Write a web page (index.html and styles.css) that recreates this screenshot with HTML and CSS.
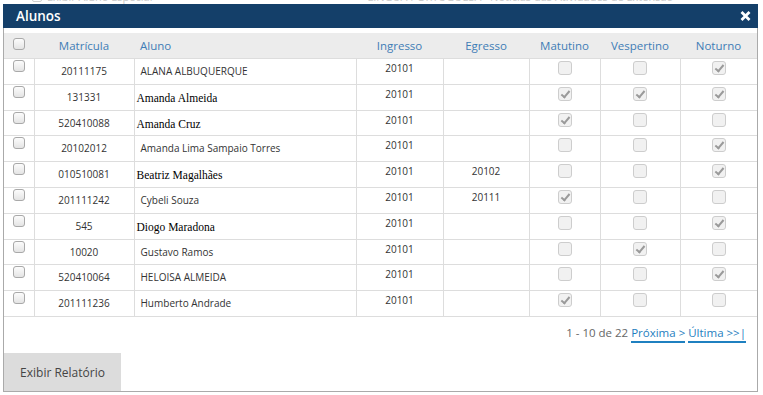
FILE: index.html
```html
<!DOCTYPE html>
<html lang="pt-BR">
<head>
    <meta charset="UTF-8">
    <meta name="viewport" content="width=device-width, initial-scale=1.0">
    <title>Alunos</title>
    <link rel="stylesheet" href="styles.css">
</head>
<body>
    <div class="backdrop">
        <div class="backdrop-left"><span class="backdrop-box"></span>Exibir Aluno Especial</div>
        <div class="backdrop-right">LÍNGUA PORTUGUESA · Notícias das Atividades de Extensão</div>
    </div>

    <div class="modal">
        <div class="modal-header">
            <span class="modal-title">Alunos</span>
            <svg class="modal-close" width="11" height="10" viewBox="0 0 11 10">
                <path d="M1.5 1 L9.5 9 M9.5 1 L1.5 9" stroke="#fff" stroke-width="2.8" fill="none"/>
            </svg>
        </div>

        <div class="modal-body">
            <table class="grid">
                <colgroup>
                    <col style="width:30px">
                    <col style="width:100px">
                    <col style="width:222px">
                    <col style="width:87px">
                    <col style="width:86px">
                    <col style="width:71px">
                    <col style="width:80px">
                    <col style="width:77px">
                </colgroup>
                <thead>
                    <tr>
                        <th><span class="sel"></span></th>
                        <th>Matrícula</th>
                        <th class="left">Aluno</th>
                        <th>Ingresso</th>
                        <th>Egresso</th>
                        <th>Matutino</th>
                        <th>Vespertino</th>
                        <th>Noturno</th>
                    </tr>
                </thead>
                <tbody>
                    <tr>
                        <td class="pick"><span class="sel"></span></td>
                        <td class="mat">20111175</td>
                        <td class="name">ALANA ALBUQUERQUE</td>
                        <td class="year">20101</td>
                        <td class="year"></td>
                        <td class="turn"><span class="cb"></span></td>
                        <td class="turn"><span class="cb"></span></td>
                        <td class="turn"><span class="cb on"></span></td>
                    </tr>
                    <tr>
                        <td class="pick"><span class="sel"></span></td>
                        <td class="mat">131331</td>
                        <td class="name serif">Amanda Almeida</td>
                        <td class="year">20101</td>
                        <td class="year"></td>
                        <td class="turn"><span class="cb on"></span></td>
                        <td class="turn"><span class="cb on"></span></td>
                        <td class="turn"><span class="cb on"></span></td>
                    </tr>
                    <tr>
                        <td class="pick"><span class="sel"></span></td>
                        <td class="mat">520410088</td>
                        <td class="name serif">Amanda Cruz</td>
                        <td class="year">20101</td>
                        <td class="year"></td>
                        <td class="turn"><span class="cb on"></span></td>
                        <td class="turn"><span class="cb"></span></td>
                        <td class="turn"><span class="cb"></span></td>
                    </tr>
                    <tr>
                        <td class="pick"><span class="sel"></span></td>
                        <td class="mat">20102012</td>
                        <td class="name">Amanda Lima Sampaio Torres</td>
                        <td class="year">20101</td>
                        <td class="year"></td>
                        <td class="turn"><span class="cb"></span></td>
                        <td class="turn"><span class="cb"></span></td>
                        <td class="turn"><span class="cb on"></span></td>
                    </tr>
                    <tr>
                        <td class="pick"><span class="sel"></span></td>
                        <td class="mat">010510081</td>
                        <td class="name serif">Beatriz Magalhães</td>
                        <td class="year">20101</td>
                        <td class="year">20102</td>
                        <td class="turn"><span class="cb"></span></td>
                        <td class="turn"><span class="cb"></span></td>
                        <td class="turn"><span class="cb on"></span></td>
                    </tr>
                    <tr>
                        <td class="pick"><span class="sel"></span></td>
                        <td class="mat">201111242</td>
                        <td class="name">Cybeli Souza</td>
                        <td class="year">20101</td>
                        <td class="year">20111</td>
                        <td class="turn"><span class="cb on"></span></td>
                        <td class="turn"><span class="cb"></span></td>
                        <td class="turn"><span class="cb"></span></td>
                    </tr>
                    <tr>
                        <td class="pick"><span class="sel"></span></td>
                        <td class="mat">545</td>
                        <td class="name serif">Diogo Maradona</td>
                        <td class="year">20101</td>
                        <td class="year"></td>
                        <td class="turn"><span class="cb"></span></td>
                        <td class="turn"><span class="cb"></span></td>
                        <td class="turn"><span class="cb on"></span></td>
                    </tr>
                    <tr>
                        <td class="pick"><span class="sel"></span></td>
                        <td class="mat">10020</td>
                        <td class="name">Gustavo Ramos</td>
                        <td class="year">20101</td>
                        <td class="year"></td>
                        <td class="turn"><span class="cb"></span></td>
                        <td class="turn"><span class="cb on"></span></td>
                        <td class="turn"><span class="cb"></span></td>
                    </tr>
                    <tr>
                        <td class="pick"><span class="sel"></span></td>
                        <td class="mat">520410064</td>
                        <td class="name">HELOISA ALMEIDA</td>
                        <td class="year">20101</td>
                        <td class="year"></td>
                        <td class="turn"><span class="cb"></span></td>
                        <td class="turn"><span class="cb"></span></td>
                        <td class="turn"><span class="cb on"></span></td>
                    </tr>
                    <tr>
                        <td class="pick"><span class="sel"></span></td>
                        <td class="mat">201111236</td>
                        <td class="name">Humberto Andrade</td>
                        <td class="year">20101</td>
                        <td class="year"></td>
                        <td class="turn"><span class="cb on"></span></td>
                        <td class="turn"><span class="cb"></span></td>
                        <td class="turn"><span class="cb"></span></td>
                    </tr>
                </tbody>
            </table>

            <div class="pager">
                1 - 10 de 22 <a href="#">Próxima &gt;</a> <a href="#">Última &gt;&gt;|</a>
            </div>

            <div class="modal-footer">
                <button type="button" class="report-button">Exibir Relatório</button>
            </div>
        </div>
    </div>
</body>
</html>
```

FILE: styles.css
```css
* {
    margin: 0;
    padding: 0;
    box-sizing: border-box;
}

body {
    background-color: #fff;
    font-family: 'Open Sans', 'Noto Sans', sans-serif;
    color: #333;
    position: relative;
    overflow: hidden;
    height: 395px;
    padding: 4px 0 0 3px;
}

/* page behind the dialog, only its bottom edge shows */
.backdrop {
    position: absolute;
    top: -9px;
    left: 0;
    right: 0;
    display: flex;
    font-size: 11px;
    color: #c9c9c9;
    line-height: 12px;
}

.backdrop-left {
    margin-left: 32px;
    display: flex;
    align-items: center;
}

.backdrop-box {
    width: 10px;
    height: 10px;
    border: 1px solid #d0d0d0;
    border-radius: 2px;
    margin-right: 5px;
}

.backdrop-right {
    margin-left: 215px;
}

.modal {
    position: relative;
    width: 755px;
    height: 388px;
    background-color: #fff;
    border: 1px solid #aaa;
    border-top: none;
    display: flex;
    flex-direction: column;
}

.modal-header {
    height: 26px;
    margin: 0 -1px;
    background-color: #143f69;
    color: #fff;
    display: flex;
    align-items: center;
    justify-content: space-between;
    padding: 0 7px 0 13px;
}

.modal-title {
    font-size: 13.5px;
    font-weight: 600;
}

.modal-body {
    flex: 1;
    display: flex;
    flex-direction: column;
    padding-top: 5px;
}

.grid {
    width: 753px;
    border-collapse: collapse;
    table-layout: fixed;
}

.grid th {
    height: 24px;
    background-color: #ececec;
    color: #3f7db6;
    font-weight: normal;
    font-size: 11.5px;
    text-align: center;
    vertical-align: middle;
    border-bottom: 1px solid #ddd;
}

.grid th.left {
    text-align: left;
    padding-left: 6px;
}

.grid tr {
    height: 25.8px;
}

.grid td {
    vertical-align: top;
    border-bottom: 1px solid #ddd;
    border-left: 1px solid #ddd;
    font-size: 10px;
    line-height: 14px;
    text-align: center;
}

.grid td:first-child {
    border-left: none;
}

.grid td.mat {
    padding-top: 5px;
}

.grid td.name {
    text-align: left;
    padding: 5px 0 0 6px;
}

.grid td.serif {
    font-family: 'Liberation Serif', 'Times New Roman', serif;
    font-size: 11.5px;
    color: #000;
    padding-left: 2px;
    padding-top: 6px;
}

.grid td.year {
    padding-top: 2px;
}

.grid td.pick {
    padding-top: 1px;
}

.grid td.turn {
    padding-top: 2px;
}

.sel {
    display: inline-block;
    width: 12px;
    height: 12px;
    border: 1px solid #a9a9a9;
    border-radius: 3px;
    background: linear-gradient(#fcfcfc, #e4e4e4);
    vertical-align: top;
}

.cb {
    display: inline-block;
    position: relative;
    width: 14px;
    height: 14px;
    border: 1px solid #cdcdcd;
    border-radius: 3px;
    background-color: #f1f1f1;
    vertical-align: top;
}

.cb.on::after {
    content: "";
    position: absolute;
    left: 4px;
    top: 1px;
    width: 3px;
    height: 7px;
    border: solid #9a9a9a;
    border-width: 0 2px 2px 0;
    transform: rotate(40deg);
}

.pager {
    text-align: right;
    padding: 8px 11px 0 0;
    font-size: 11.5px;
    line-height: 16px;
    color: #666;
    height: 36px;
}

.pager a {
    color: #1f80c0;
    text-decoration: none;
    border-bottom: 2px solid #1f80c0;
    padding-bottom: 1px;
}

.modal-footer {
    margin-top: auto;
}

.report-button {
    width: 117px;
    height: 38px;
    border: none;
    background-color: #dcdcdc;
    color: #444;
    font-family: 'Open Sans', 'Noto Sans', sans-serif;
    font-size: 12px;
    cursor: pointer;
}

.report-button:hover {
    background-color: #d2d2d2;
}
```
